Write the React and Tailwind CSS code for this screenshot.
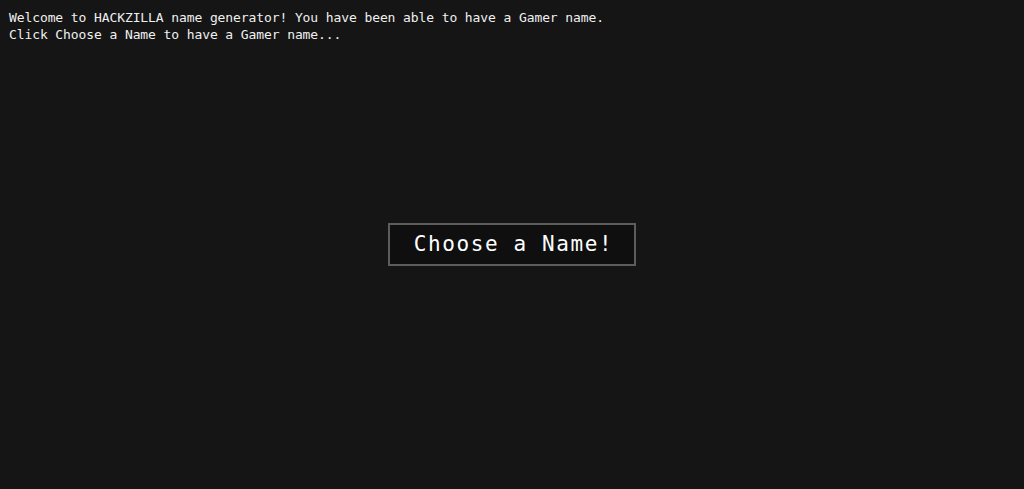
import React from 'react';

export default function App() {
  return (
    <div className="grid h-screen w-full bg-[#151515] font-['DejaVu_Sans_Mono',monospace] text-[#f0f0f0]">
      <div className="col-start-1 row-start-1 self-start justify-self-start px-[9px] pt-[9px] text-[13px] leading-[17px] tracking-[-0.1px]">
        <p>Welcome to HACKZILLA name generator! You have been able to have a Gamer name.</p>
        <p>Click Choose a Name to have a Gamer name...</p>
      </div>
      <div className="col-start-1 row-start-1 self-center justify-self-center">
        <button className="flex h-[43px] w-[248px] items-center justify-center border-2 border-[#5c5c5c] bg-[#0f0f0f] pl-[3px] text-[21px] tracking-[1.6px] text-white">
          Choose a Name!
        </button>
      </div>
    </div>
  );
}
